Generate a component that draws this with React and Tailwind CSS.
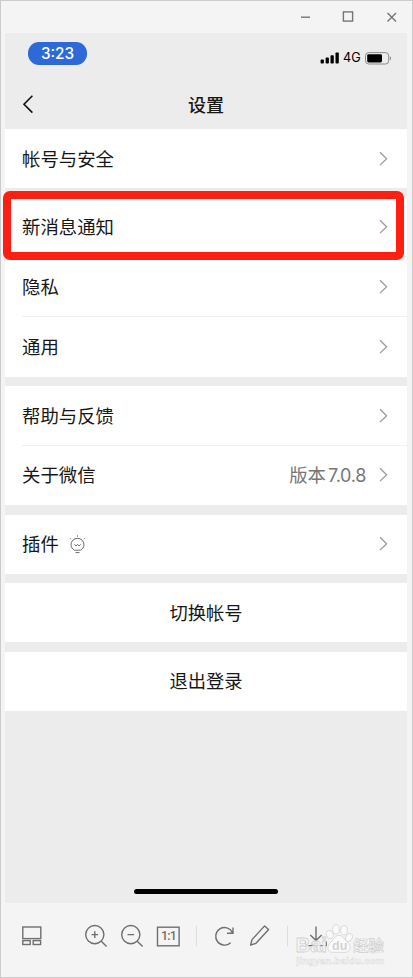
function Chevron() {
  return (
    <svg className="h-4 w-[9px] shrink-0" viewBox="0 0 9 16" fill="none" stroke="#9c9c9c" strokeWidth="1.3">
      <path d="M1 1.3 7.6 7.7 1 14.1" />
    </svg>
  );
}

function Row({ label, value, icon, height, divider, children }) {
  return (
    <div className={`relative flex items-center bg-white pl-[17px] ${height}`}>
      <span className="pb-[2px] text-[18.4px] leading-6 whitespace-nowrap text-[#171717]">{label}</span>
      {icon}
      <div className="ml-auto flex items-center pr-[19px]">
        {value}
        <Chevron />
      </div>
      {divider && <div className="absolute right-0 bottom-0 left-[17px] h-px bg-[#f1f1f1]" />}
      {children}
    </div>
  );
}

function Action({ label }) {
  return (
    <div className="flex h-[59px] items-center justify-center bg-white pb-[2px] text-[18.3px] leading-6 text-[#171717]">
      {label}
    </div>
  );
}

function Bulb() {
  return (
    <svg className="ml-[10px] h-[19px] w-[17px]" viewBox="0 0 17 19" fill="none" stroke="#6a6a6a" strokeWidth="1">
      <path d="M5.6 15.2C3.4 14.3 2 12.1 2 9.8a6.5 6.5 0 0 1 13 0c0 2.3-1.4 4.5-3.6 5.4zM6.5 17.6h4" />
      <path d="m5.4 9.4 1.6 1.6 1.6-1.6 1.6 1.6 1.4-1.6" />
      <path d="M8.5.4v1.3M1 3.2l1 1M16 3.2l-1 1" />
    </svg>
  );
}

function WindowControls() {
  return (
    <div className="flex h-8 shrink-0 items-center justify-end pr-[15px]">
      <svg className="h-3 w-[98px]" viewBox="0 0 98 12" fill="none" stroke="#757575" strokeWidth="1.4">
        <path d="M2 6.2h9" />
        <rect x="44.4" y="0.9" width="9.2" height="9.2" />
        <path d="m88.5 2 8.5 8.5M97 2l-8.5 8.5" />
      </svg>
    </div>
  );
}

function StatusBar() {
  return (
    <div className="flex h-[47px] items-start justify-between pt-[9px] pr-[15px] pl-[23px]">
      <div className="flex h-[23px] w-[59px] items-center justify-center rounded-[11px] bg-[#2d6ad8] pt-px font-[Inter] text-[15.3px] leading-[22px] font-medium text-white">
        3:23
      </div>
      <div className="flex items-center pt-[7px]">
        <svg className="h-3 w-5" viewBox="0 0 20 12" fill="#000">
          <rect x="0.6" y="7.6" width="3.3" height="3.9" rx="0.8" />
          <rect x="5.6" y="5.6" width="3.3" height="5.9" rx="0.8" />
          <rect x="10.5" y="3.2" width="3.3" height="8.3" rx="0.8" />
          <rect x="15.5" y="0.5" width="3.3" height="11" rx="0.8" />
        </svg>
        <span className="ml-[3px] w-[18px] font-[Inter] text-[12.7px] leading-[18px] text-black">4G</span>
        <svg className="ml-1 h-[13px] w-[27px]" viewBox="0 0 27 13" fill="none">
          <rect x="0.5" y="0.6" width="23.2" height="11.4" rx="3.2" stroke="#8a8a8a" />
          <rect x="2.2" y="2.2" width="14.8" height="8.2" rx="1.4" fill="#000" />
          <path d="M24.9 4.3c1.6.7 1.6 3.3 0 4z" fill="#8a8a8a" />
        </svg>
      </div>
    </div>
  );
}

function Watermark() {
  return (
    <svg className="absolute top-[20px] left-[290px] h-[48px] w-[96px]" viewBox="0 0 96 48">
      <g fill="#fafafa" fillOpacity="0.85" stroke="#d6d6d6" strokeWidth="0.9">
        <ellipse cx="38.7" cy="11.6" rx="3.4" ry="4.2" transform="rotate(-20 38.7 11.6)" />
        <ellipse cx="45" cy="6.4" rx="3.3" ry="4.6" />
        <ellipse cx="53" cy="7.3" rx="3.3" ry="4.6" />
        <ellipse cx="58" cy="14.4" rx="3.2" ry="4.2" transform="rotate(20 58 14.4)" />
        <path d="M48 12.4c-4 0-5 4-8 6.6-4.6 3.8-4 10 1.2 10.3h13.4c5.4-.4 6-6.4 1.8-10.1C53.3 16.4 52 12.4 48 12.4z" />
      </g>
      <g fill="#f9f9f9" fillOpacity="0.85" stroke="#d0d0d0" strokeWidth="0.8" fontFamily="Liberation Sans" fontWeight="bold">
        <text x="4.8" y="29.3" fontSize="20" textLength="31">Bai</text>
        <text x="41" y="27" fontSize="12.5" fill="#cbcbcb" stroke="none">du</text>
        <text x="62.3" y="28.4" fontSize="15.3" fontFamily="Noto Sans CJK SC" strokeWidth="0.7">经验</text>
      </g>
      <text x="5.3" y="40.5" fontSize="9.8" fontFamily="Liberation Sans" fontWeight="bold" fill="#fafafa" stroke="#dadada" strokeWidth="0.5" textLength="88">
        jingyan.baidu.com
      </text>
    </svg>
  );
}

function Toolbar() {
  return (
    <div className="relative flex h-[74px] shrink-0 items-center pb-[8px] pl-[20px]">
      <svg className="h-6 w-6" viewBox="0 0 24 24" fill="none" stroke="#6f6f6f" strokeWidth="1.4">
        <rect x="1.8" y="3" width="18" height="11.6" />
        <rect x="1.8" y="16.6" width="7.4" height="3.9" />
        <rect x="12.2" y="16.6" width="7.4" height="3.9" />
      </svg>
      <svg className="ml-[39px] h-6 w-6" viewBox="0 0 24 24" fill="none" stroke="#6f6f6f" strokeWidth="1.4">
        <circle cx="10.8" cy="10.6" r="9.1" />
        <path d="m17 17 5.6 5.6M7.5 10.6h6.6M10.8 7.3v6.6" />
      </svg>
      <svg className="ml-3 h-6 w-6" viewBox="0 0 24 24" fill="none" stroke="#6f6f6f" strokeWidth="1.4">
        <circle cx="10.8" cy="10.6" r="9.1" />
        <path d="m17 17 5.6 5.6M7.5 10.6h6.6" />
      </svg>
      <div className="relative ml-3 h-6 w-6">
        <svg className="h-6 w-6" viewBox="0 0 24 24" fill="none" stroke="#6f6f6f" strokeWidth="1.4">
          <rect x="1.5" y="3.2" width="21.6" height="18.6" />
        </svg>
        <span className="absolute inset-0 flex items-center justify-center pt-px pl-px font-[Roboto] text-[12.5px] font-medium tracking-[-0.8px] text-[#6f6f6f]">
          1:1
        </span>
      </div>
      <div className="ml-4 h-5 w-px bg-[#dedede]" />
      <svg className="ml-4 h-6 w-6" viewBox="0 0 24 24" fill="none" stroke="#6f6f6f" strokeWidth="1.4">
        <path d="M17.6 18.7a8.8 8.8 0 1 1 1.8-10.3M20 3.4v5.9h-6" />
      </svg>
      <svg className="ml-3 h-6 w-6" viewBox="0 0 24 24" fill="none" stroke="#6f6f6f" strokeWidth="1.4" strokeLinejoin="round">
        <path d="M1.6 21 3 15.6 15.6 1.9l4 3.6L7 19.3z" />
      </svg>
      <div className="ml-[14px] h-5 w-px bg-[#dedede]" />
      <svg className="ml-4 h-6 w-6" viewBox="0 0 24 24" fill="none" stroke="#6f6f6f" strokeWidth="1.4">
        <path d="M12 2.4v14M6.3 10.9l5.7 5.7 5.7-5.7M1.8 17.6v4h20.4v-4" />
      </svg>
      <Watermark />
    </div>
  );
}

export default function App() {
  return (
    <div className="flex h-[978px] w-[413px] flex-col border border-[#cbcbcb] bg-[#f4f4f4] font-['Noto_Sans_CJK_SC',sans-serif]">
      <WindowControls />
      <div className="mr-[5px] ml-1 flex h-[870px] shrink-0 flex-col bg-[#ececec]">
        <StatusBar />
        <div className="flex h-[49px] items-center pb-[2px] pl-[17px]">
          <svg className="h-5 w-3" viewBox="0 0 12 20" fill="none" stroke="#111" strokeWidth="1.6">
            <path d="M10.4 1.8 2 10.2l8.4 8.4" />
          </svg>
          <h1 className="flex-1 pr-[29px] text-center text-[18px] leading-6 font-medium text-[#171717]">设置</h1>
        </div>
        <div className="flex flex-col gap-[9.5px]">
          <Row label="帐号与安全" height="h-[59px]" />
          <div>
            <Row label="新消息通知" height="h-[59.5px]" divider>
              <div className="absolute top-[-7px] left-[-2.5px] z-10 h-[69px] w-[401px] rounded-[7px] border-8 border-[#ff1f12]" />
            </Row>
            <Row label="隐私" height="h-[59.5px]" divider />
            <Row label="通用" height="h-[60px]" />
          </div>
          <div>
            <Row label="帮助与反馈" height="h-[59.5px]" divider />
            <Row
              label="关于微信"
              height="h-[59.5px]"
              value={<span className="mr-[13px] pb-px text-[18.4px] leading-6 whitespace-nowrap text-[#777]">版本<span className="ml-[2px] font-[Inter] text-[18px] tracking-[-0.3px]">7.0.8</span></span>}
            />
          </div>
          <Row label="插件" height="h-[59px]" icon={<Bulb />} />
          <Action label="切换帐号" />
          <Action label="退出登录" />
        </div>
        <div className="mx-auto mt-auto mb-[9px] h-[5px] w-36 rounded-full bg-black" />
      </div>
      <Toolbar />
    </div>
  );
}
